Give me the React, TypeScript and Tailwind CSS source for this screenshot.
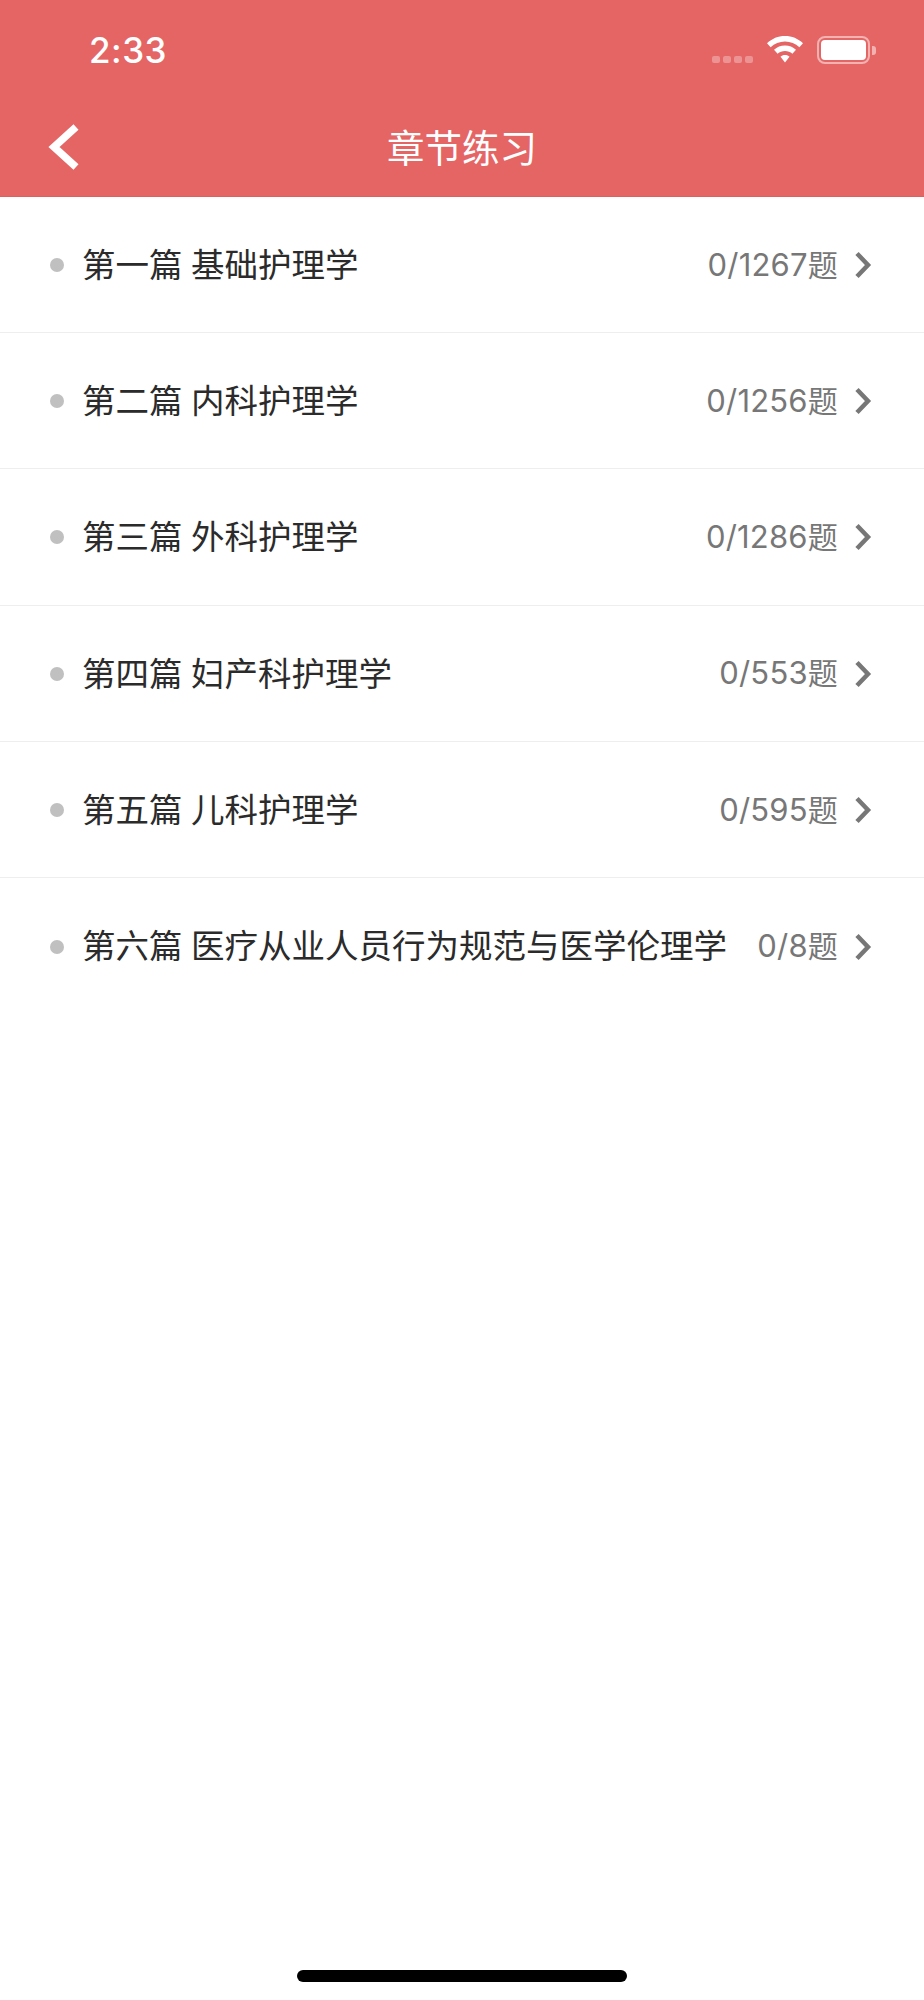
const chapters = [
  { title: '第一篇 基础护理学', count: '0/1267' },
  { title: '第二篇 内科护理学', count: '0/1256' },
  { title: '第三篇 外科护理学', count: '0/1286' },
  { title: '第四篇 妇产科护理学', count: '0/553' },
  { title: '第五篇 儿科护理学', count: '0/595' },
  { title: '第六篇 医疗从业人员行为规范与医学伦理学', count: '0/8' },
];

function StatusBar() {
  return (
    <div className="flex h-[99px] items-start justify-between pl-[89px] pr-[48px] pt-[29px]">
      <span className="font-['Inter',sans-serif] text-[35px] font-medium leading-[42px] tracking-[0.5px] text-white">2:33</span>
      <div className="flex items-start pt-[7px]">
        <div className="mt-[20px] flex gap-[3px]">
          <i className="h-[7px] w-[8px] rounded-[2px] bg-white/30" />
          <i className="h-[7px] w-[8px] rounded-[2px] bg-white/30" />
          <i className="h-[7px] w-[8px] rounded-[2px] bg-white/30" />
          <i className="h-[7px] w-[8px] rounded-[2px] bg-white/30" />
        </div>
        <svg className="ml-[14px]" width="36" height="27" viewBox="0 0 36 27" fill="none">
          <path d="M18 0C11 0 5 2.600 0 7.200L3.600 11.200C7.500 7.700 12.500 5.600 18 5.600C23.500 5.600 28.500 7.700 32.400 11.200L36 7.200C31 2.600 25 0 18 0Z" fill="white" />
          <path d="M18 9.500C13.800 9.500 10 11 7 13.700L10.600 17.700C12.600 16 15.200 15 18 15C20.800 15 23.400 16 25.400 17.700L29 13.700C26 11 22.200 9.500 18 9.500Z" fill="white" />
          <path d="M18 19C16.200 19 14.600 19.600 13.500 20.700L18 26.500L22.500 20.700C21.400 19.600 19.800 19 18 19Z" fill="white" />
        </svg>
        <div className="ml-[14px] flex items-center">
          <div className="h-[28px] w-[53px] rounded-[8px] border-2 border-white/50 p-[2px]">
            <div className="h-full w-full rounded-[4px] bg-white" />
          </div>
          <div className="ml-[2px] h-[9px] w-[4px] rounded-r-[3px] bg-white/50" />
        </div>
      </div>
    </div>
  );
}

function Header() {
  return (
    <header className="h-[197px] border-b border-[#dd6060] bg-[#e56565]">
      <StatusBar />
      <div className="relative flex h-[96px] items-start justify-center pt-[22px]">
        <svg className="absolute left-[47px] top-[22px]" width="34" height="50" viewBox="0 0 34 50" fill="none">
          <path d="M29 6L7 26L29 46" stroke="white" strokeWidth="7.500" />
        </svg>
        <h1 className="font-['Noto_Sans_CJK_SC',sans-serif] text-[37.500px] font-normal leading-[50px] text-white">章节练习</h1>
      </div>
    </header>
  );
}

function ChapterRow({ title, count, last }: { title: string; count: string; last: boolean }) {
  return (
    <div className={last ? 'flex h-[136.200px] items-center pl-[50px] pr-[52px]' : 'flex h-[136.200px] items-center border-b border-[#eeeeee] pl-[50px] pr-[52px]'}>
      <span className="mt-[1px] h-[14px] w-[14px] shrink-0 rounded-full bg-[#c0c0c0]" />
      <span className="ml-[18px] flex-1 whitespace-nowrap pb-[3px] font-['Noto_Sans_CJK_SC',sans-serif] text-[33.500px] text-[#2b2b2b] [word-spacing:1px]">{title}</span>
      <span className="whitespace-nowrap font-['Inter','Noto_Sans_CJK_SC',sans-serif] text-[31px] tracking-[0.2px] text-[#777777]">
        {count}
        <span className="font-['Noto_Sans_CJK_SC',sans-serif] text-[30px]">题</span>
      </span>
      <svg className="ml-[16px] mt-[1px] shrink-0" width="18" height="28" viewBox="0 0 18 28" fill="none">
        <path d="M3 2.500L14 14L3 25.500" stroke="#777777" strokeWidth="4.500" />
      </svg>
    </div>
  );
}

export default function App() {
  return (
    <div className="flex min-h-[2000px] w-[924px] flex-col bg-white">
      <Header />
      <main className="flex-1">
        {chapters.map((c, i) => (
          <ChapterRow key={c.title} title={c.title} count={c.count} last={i === chapters.length - 1} />
        ))}
      </main>
      <div className="flex justify-center pb-[18px]">
        <div className="h-[12px] w-[330px] rounded-full bg-black" />
      </div>
    </div>
  );
}
